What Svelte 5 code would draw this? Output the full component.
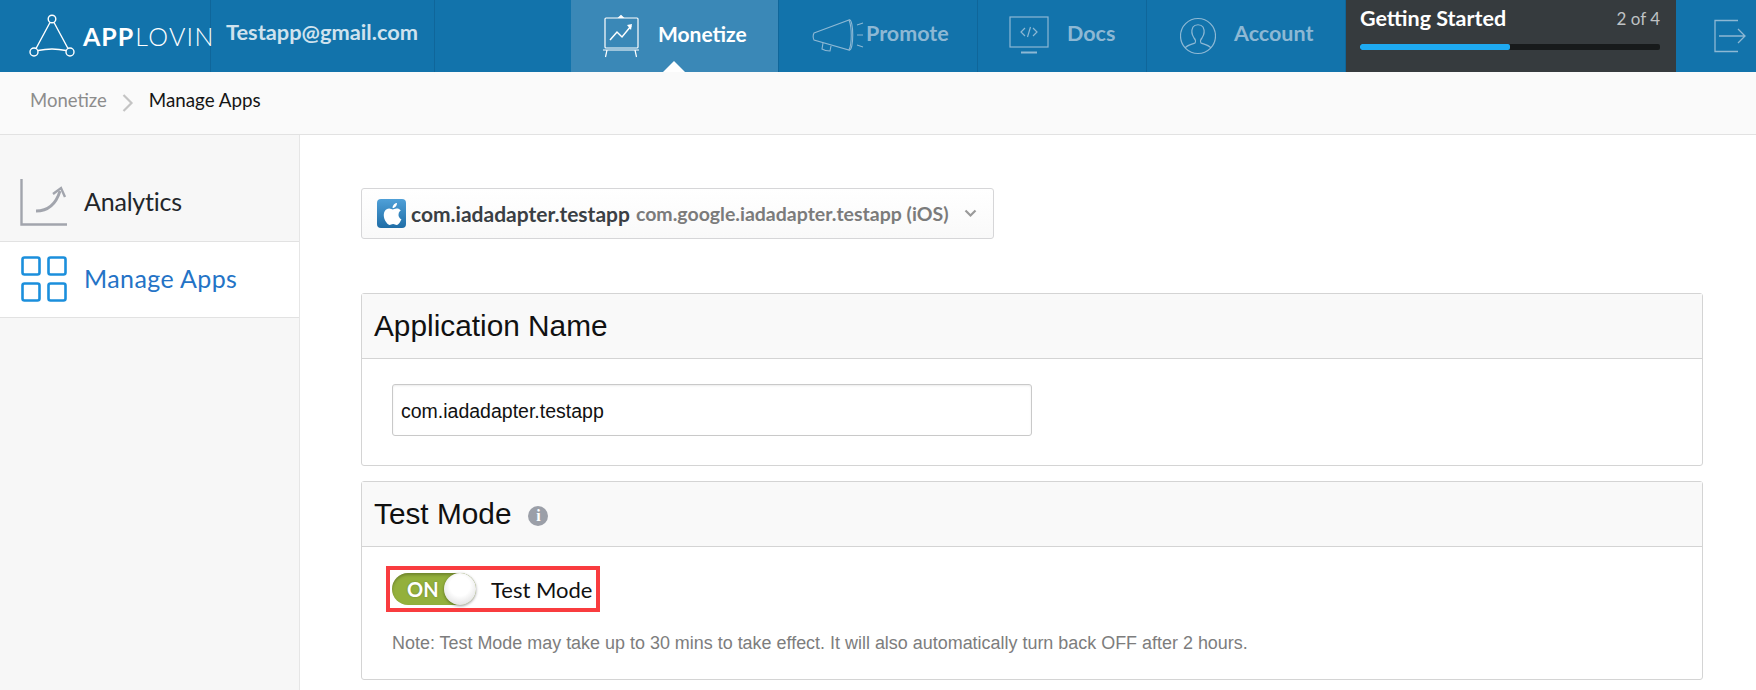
<script>
  const navItems = [
    { id: 'monetize', label: 'Monetize', active: true },
    { id: 'promote', label: 'Promote' },
    { id: 'docs', label: 'Docs' },
    { id: 'account', label: 'Account' }
  ];
</script>

<div class="page">
  <header class="topbar">
    <div class="logo">
      <svg class="logo-mark" width="46" height="46" viewBox="0 0 46 46" fill="none" stroke="#fff" stroke-width="1.4">
        <circle cx="23" cy="6" r="3.8" />
        <circle cx="5" cy="39" r="4" />
        <circle cx="41" cy="39" r="4" />
        <path d="M21 9.500 7 35.500M25 9.500l14 26M9 37.500c9-2 19-2 28 0" />
      </svg>
      <span class="wordmark"><b>APP</b><i>LOVIN</i></span>
    </div>
    <div class="email">Testapp@gmail.com</div>
    <div class="spacer"></div>
    {#each navItems as item (item.id)}
      <div class="nav-item {item.id}" class:active={item.active}>
        {#if item.id === 'monetize'}
          <svg width="38" height="46" viewBox="0 0 38 46" fill="none" stroke="#fff" stroke-width="1.2">
            <rect x="3" y="5" width="33" height="30" rx="1" />
            <path d="M17 4.500l2-2 2 2z" fill="#fff" />
            <path d="M8 27l7-8 5 5 9-11" stroke-width="1.5" />
            <path d="M25 12l5-1-1 6z" fill="#fff" stroke="none" />
            <path d="M1 37h36M5 37l-1.500 7M33 37l1.500 7" />
          </svg>
        {:else if item.id === 'promote'}
          <svg width="54" height="42" viewBox="0 0 54 42" fill="none" stroke="#8db8d4" stroke-width="1.1">
            <path d="M2 18 37 5c3 7 3 24 0 30L2 25c-1-2-1-5 0-7z" />
            <path d="M37 5c5-2 5 32 0 30" />
            <path d="M11 28l-1 6c3 2 7 2 8 2l1-5" />
            <path d="M45 10l6-2M45 20h6M45 30l6 2" />
          </svg>
        {:else if item.id === 'docs'}
          <svg width="40" height="40" viewBox="0 0 40 40" fill="none" stroke="#8db8d4" stroke-width="1.2">
            <rect x="1" y="1" width="38" height="30" />
            <path d="M16 12l-4 4 4 4M24 12l4 4-4 4M21.500 11l-3 10" />
            <path d="M12 36.500h16" stroke-width="2" />
          </svg>
        {:else}
          <svg width="36" height="40" viewBox="0 0 36 40" fill="none" stroke="#8db8d4" stroke-width="1.2">
            <circle cx="18" cy="20" r="17.500" />
            <path d="M5 32c2-3 8-4 10-5 1-2 0-4-1-5-2-3-3-7-1-11 2-3 8-3 10 0 2 4 1 8-1 11-1 1-2 3-1 5 2 1 8 2 10 5" />
          </svg>
        {/if}
        <span class="nav-label">{item.label}</span>
      </div>
    {/each}
    <div class="getting-started">
      <div class="gs-row">
        <span class="gs-title">Getting Started</span>
        <span class="gs-count">2 of 4</span>
      </div>
      <div class="gs-track"><div class="gs-fill" style="width: 50%"></div></div>
    </div>
    <div class="logout">
      <svg width="34" height="34" viewBox="0 0 34 34" fill="none" stroke="#8db8d4" stroke-width="1.300">
        <path d="M25 1.500H2v31h23M6 17h26M25 10l7 7-7 7" />
      </svg>
    </div>
  </header>

  <nav class="breadcrumb">
    <span class="crumb">Monetize</span>
    <svg class="crumb-sep" width="12" height="18" viewBox="0 0 12 18" fill="none" stroke="#c4c4c4" stroke-width="2.200">
      <path d="M1.500 1l8 8-8 8" />
    </svg>
    <span class="crumb-current">Manage Apps</span>
  </nav>

  <div class="body">
    <aside class="sidebar">
      <div class="side-item">
        <svg width="48" height="48" viewBox="0 0 48 48" fill="none" stroke="#a2a5ad" stroke-width="2.400">
          <path d="M1.500 1v45.500H47" />
          <path d="M16 33c12 0 20-7 24-20" stroke-width="2.800" />
          <path d="M33 16l8-6 4 9" stroke-width="2.400" />
        </svg>
        <span class="side-label">Analytics</span>
      </div>
      <div class="side-item selected">
        <svg width="46" height="46" viewBox="0 0 46 46" fill="none" stroke="#1b8fdc" stroke-width="2.600">
          <rect x="1.500" y="1.500" width="17" height="17" rx="2" />
          <rect x="27.500" y="1.500" width="17" height="17" rx="2" />
          <rect x="1.500" y="27.500" width="17" height="17" rx="2" />
          <rect x="27.500" y="27.500" width="17" height="17" rx="2" />
        </svg>
        <span class="side-label">Manage Apps</span>
      </div>
    </aside>

    <main class="content">
      <div class="app-select">
        <span class="app-icon">
          <svg width="20" height="24" viewBox="0 0 20 24" fill="#fff">
            <path d="M16.500 12.700c0-2.700 2.200-4 2.300-4.100-1.300-1.800-3.200-2.100-3.900-2.100-1.700-.2-3.200 1-4.100 1-.8 0-2.200-1-3.600-1-1.800 0-3.500 1.100-4.500 2.700-1.900 3.300-.5 8.200 1.400 10.900.9 1.300 2 2.800 3.400 2.800 1.400-.1 1.900-.9 3.600-.9 1.600 0 2.100.9 3.500.9 1.500 0 2.400-1.300 3.300-2.700 1-1.500 1.500-3 1.500-3.100-.1 0-2.900-1.100-2.900-4.400zM13.800 4.600c.7-.9 1.300-2.200 1.100-3.500-1.100 0-2.400.7-3.200 1.700-.7.800-1.300 2.100-1.100 3.300 1.200.1 2.400-.6 3.200-1.500z" />
          </svg>
        </span>
        <span class="app-name">com.iadadapter.testapp</span>
        <span class="app-bundle">com.google.iadadapter.testapp (iOS)</span>
        <svg class="caret" width="13" height="9" viewBox="0 0 13 9" fill="none" stroke="#9a9a9a" stroke-width="2.200">
          <path d="M1.500 1.500l5 5 5-5" />
        </svg>
      </div>

      <section class="card name-card">
        <h2 class="card-head">Application Name</h2>
        <div class="card-body">
          <input class="text-input" type="text" value="com.iadadapter.testapp" />
        </div>
      </section>

      <section class="card mode-card">
        <h2 class="card-head">
          Test Mode
          <span class="info">i</span>
        </h2>
        <div class="card-body">
          <div class="highlight">
            <div class="toggle">
              <span class="toggle-label">ON</span>
              <span class="knob"></span>
            </div>
            <span class="toggle-text">Test Mode</span>
          </div>
          <p class="note">Note: Test Mode may take up to 30 mins to take effect. It will also automatically turn back OFF after 2 hours.</p>
        </div>
      </section>
    </main>
  </div>
</div>

<style>
  :global(body) {
    margin: 0;
    overflow: hidden;
  }

  .page {
    width: 1756px;
    height: 690px;
    overflow: hidden;
    background: #fff;
    font-family: Lato, "Noto Sans", sans-serif;
  }

  .topbar {
    height: 72px;
    display: flex;
    background: #1273ab;
    color: #8db8d4;
    position: relative;
    z-index: 1;
  }

  .logo {
    width: 211px;
    box-sizing: border-box;
    padding-left: 29px;
    display: flex;
    align-items: center;
    gap: 8px;
    border-right: 1px solid #0f669a;
    flex-shrink: 0;
  }

  .logo-mark {
    flex-shrink: 0;
  }

  .wordmark {
    color: #fff;
    font-size: 25px;
    white-space: nowrap;
  }

  .wordmark b {
    font-weight: 700;
    letter-spacing: 1px;
  }

  .wordmark i {
    font-style: normal;
    font-weight: 300;
    letter-spacing: 1.300px;
    margin-left: 1px;
  }

  .email {
    width: 224px;
    box-sizing: border-box;
    padding-left: 15px;
    line-height: 64px;
    font-size: 21.800px;
    font-weight: 700;
    color: #cfe2ee;
    border-right: 1px solid #0f669a;
  }

  .spacer {
    width: 136px;
  }

  .nav-item {
    display: flex;
    align-items: center;
    font-size: 21.500px;
    font-weight: 700;
    border-right: 1px solid #0f669a;
    box-sizing: border-box;
    position: relative;
  }

  .nav-label {
    margin-bottom: 6px;
  }

  .nav-item.monetize {
    width: 208px;
    padding-left: 31px;
    gap: 18px;
    background: #3a88b7;
    color: #fff;
    font-size: 21px;
  }

  .nav-item.active::after {
    content: "";
    position: absolute;
    left: 92px;
    bottom: 0;
    border-left: 11px solid transparent;
    border-right: 11px solid transparent;
    border-bottom: 11px solid #fff;
  }

  .nav-item.promote {
    width: 199px;
    padding-left: 33px;
    gap: 0;
  }

  .nav-item.docs {
    width: 169px;
    padding-left: 31px;
    gap: 18px;
  }

  .nav-item.account {
    width: 199px;
    padding-left: 33px;
    gap: 18px;
  }

  .getting-started {
    width: 330px;
    box-sizing: border-box;
    background: #363b3e;
    padding: 5px 16px 0 14px;
    flex-shrink: 0;
  }

  .gs-row {
    display: flex;
    justify-content: space-between;
    align-items: center;
  }

  .gs-title {
    color: #fff;
    font-size: 21.500px;
    font-weight: 700;
  }

  .gs-count {
    color: #bfc2c4;
    font-size: 17px;
  }

  .gs-track {
    margin-top: 13px;
    height: 6px;
    border-radius: 2px;
    background: #171a1b;
    overflow: hidden;
  }

  .gs-fill {
    height: 100%;
    background: #1eaaf1;
    border-radius: 2px;
  }

  .logout {
    flex: 1;
    display: flex;
    align-items: center;
    padding: 0 0 0 37px;
  }

  .breadcrumb {
    height: 63px;
    box-sizing: border-box;
    display: flex;
    align-items: center;
    padding: 0 0 7px 30px;
    background: #fafafa;
    border-bottom: 1px solid #e2e2e2;
    font-size: 18.500px;
  }

  .crumb {
    color: #8c8c8c;
  }

  .crumb-sep {
    margin: 7px 15px 0 15px;
  }

  .crumb-current {
    color: #151515;
    font-size: 18.800px;
  }

  .body {
    display: flex;
    height: 555px;
  }

  .sidebar {
    width: 300px;
    flex-shrink: 0;
    background: #f7f7f7;
    border-right: 1px solid #e6e6e6;
    box-sizing: border-box;
    padding-top: 1px;
  }

  .side-item {
    display: flex;
    align-items: center;
    gap: 16px;
    padding-left: 20px;
    font-size: 25px;
    color: #23262a;
    box-sizing: border-box;
  }

  .side-label {
    margin-bottom: 2px;
    letter-spacing: -0.200px;
  }

  .side-item:first-child {
    height: 106px;
    padding-top: 27px;
    border-bottom: 1px solid #e2e2e2;
  }

  .side-item.selected {
    height: 76px;
    background: #fff;
    color: #2473c6;
    border-bottom: 1px solid #e2e2e2;
    padding-left: 21px;
    padding-bottom: 2px;
    gap: 17px;
  }

  .selected .side-label {
    letter-spacing: 0.400px;
  }

  .content {
    flex: 1;
    padding: 53px 53px 0 61px;
  }

  .app-select {
    width: 633px;
    height: 51px;
    box-sizing: border-box;
    display: flex;
    align-items: center;
    padding-left: 15px;
    border: 1px solid #d6d6d8;
    border-radius: 3px;
    background: linear-gradient(#fff, #f9f9f9);
    font-size: 21px;
    font-weight: 700;
    white-space: nowrap;
  }

  .app-icon {
    width: 29px;
    height: 29px;
    border-radius: 4px;
    background: linear-gradient(#4fa0d8, #1f6da6);
    display: flex;
    align-items: center;
    justify-content: center;
    margin-right: 5px;
  }

  .app-name {
    color: #3a3f44;
  }

  .app-bundle {
    color: #7b7b7b;
    font-size: 19.500px;
    margin-left: 6px;
  }

  .caret {
    margin-left: 15px;
  }

  .card {
    border: 1px solid #d4d4d4;
    border-radius: 3px;
    box-sizing: border-box;
    background: #fff;
  }

  .name-card {
    margin-top: 54px;
    height: 173px;
  }

  .mode-card {
    margin-top: 15px;
    height: 199px;
  }

  .card-head {
    margin: 0;
    height: 65px;
    box-sizing: border-box;
    display: flex;
    align-items: center;
    padding: 0 0 0 12px;
    background: #f9f9f9;
    border-bottom: 1px solid #d4d4d4;
    font-family: "Liberation Sans", Arial, sans-serif;
    font-size: 29.800px;
    font-weight: 400;
    color: #111;
  }

  .text-input {
    display: block;
    width: 640px;
    height: 52px;
    box-sizing: border-box;
    padding: 2px 8px 0;
    border: 1px solid #c9c9c9;
    border-radius: 3px;
    font-family: "Liberation Sans", Arial, sans-serif;
    font-size: 19.500px;
    color: #111;
    box-shadow: inset 0 1px 2px rgba(0, 0, 0, 0.08);
    outline: none;
  }

  .name-card .card-body {
    padding: 25px 0 0 30px;
  }

  .mode-card .card-body {
    padding: 19px 0 0 24px;
  }

  .info {
    margin: 3px 0 0 17px;
    width: 20px;
    height: 20px;
    border-radius: 50%;
    background: #9b9fa8;
    color: #fff;
    font-family: "Liberation Serif", serif;
    font-size: 16px;
    font-weight: 700;
    line-height: 20px;
    text-align: center;
  }

  .highlight {
    width: 214px;
    height: 46px;
    box-sizing: border-box;
    display: flex;
    align-items: center;
    padding-left: 2px;
    border: 4px solid #f93c3f;
    white-space: nowrap;
  }

  .toggle {
    width: 84px;
    height: 32px;
    border-radius: 16px;
    background: #93b03c;
    box-shadow: inset 0 2px 3px rgba(0, 0, 0, 0.25);
    display: flex;
    align-items: center;
    justify-content: space-between;
    flex-shrink: 0;
  }

  .toggle-label {
    margin-left: 15px;
    color: #fff;
    font-size: 20px;
    font-weight: 700;
    text-shadow: 0 0 2px rgba(0, 0, 0, 0.25);
  }

  .knob {
    width: 32px;
    height: 32px;
    border-radius: 50%;
    background: radial-gradient(circle at 50% 40%, #fff 40%, #d4d4d4);
    box-shadow: 0 1px 3px rgba(0, 0, 0, 0.4);
  }

  .toggle-text {
    margin-left: 15px;
    font-size: 22px;
    color: #111;
  }

  .note {
    margin: 21px 0 0 6px;
    font-family: "Liberation Sans", Arial, sans-serif;
    font-size: 17.950px;
    color: #7d7d7d;
  }
</style>
